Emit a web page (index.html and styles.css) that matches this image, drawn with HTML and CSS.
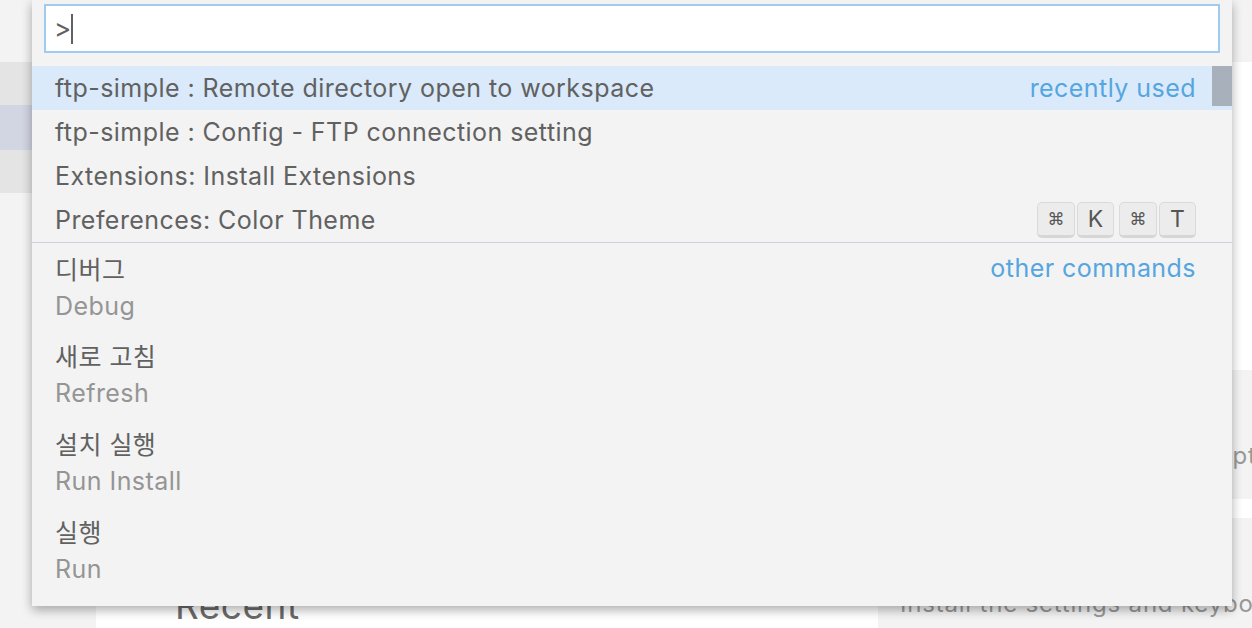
FILE: index.html
```html
<!DOCTYPE html>
<html lang="ko">
<head>
<meta charset="utf-8">
<title>Command Palette</title>
<link rel="stylesheet" href="styles.css">
</head>
<body>
<div class="workbench">
  <div class="sidebar">
    <div class="side-row"></div>
    <div class="side-row side-row-active"></div>
    <div class="side-row"></div>
  </div>
  <div class="main">
    <div class="tabbar"></div>
    <div class="editor">
      <div class="col-left">
        <h2 class="recent">Recent</h2>
      </div>
      <div class="col-right">
        <div class="panel panel-one">
          <h3 class="panel-title">Tools and languages</h3>
          <p class="panel-text">Install support for JavaScript, TypeScript, Python, PHP, Azure, Docker and more</p>
        </div>
        <div class="panel panel-two">
          <h3 class="panel-title">Settings and keybindings</h3>
          <p class="panel-text">Install the settings and keyboard shortcuts of Vim, Sublime, Atom and others</p>
        </div>
      </div>
    </div>
  </div>
</div>

<div class="quick-open">
  <div class="input-box">
    <span class="input-text">&gt;</span><span class="caret"></span>
  </div>
  <div class="list">
    <div class="row row-focused">
      <span class="label">ftp-simple : Remote directory open to workspace</span>
      <span class="group">recently used</span>
    </div>
    <div class="row">
      <span class="label">ftp-simple : Config - FTP connection setting</span>
    </div>
    <div class="row">
      <span class="label">Extensions: Install Extensions</span>
    </div>
    <div class="row">
      <span class="label">Preferences: Color Theme</span>
      <span class="keys">
        <span class="chord"><kbd class="key key-sym">⌘</kbd><kbd class="key">K</kbd></span>
        <span class="chord"><kbd class="key key-sym">⌘</kbd><kbd class="key">T</kbd></span>
      </span>
    </div>
    <div class="item item-first">
      <div class="item-line">
        <span class="label">디버그</span>
        <span class="group">other commands</span>
      </div>
      <div class="detail">Debug</div>
    </div>
    <div class="item">
      <div class="item-line"><span class="label">새로 고침</span></div>
      <div class="detail">Refresh</div>
    </div>
    <div class="item">
      <div class="item-line"><span class="label">설치 실행</span></div>
      <div class="detail">Run Install</div>
    </div>
    <div class="item">
      <div class="item-line"><span class="label">실행</span></div>
      <div class="detail">Run</div>
    </div>
  </div>
  <div class="scroll-thumb"></div>
</div>
</body>
</html>
```

FILE: styles.css
```css
* { box-sizing: border-box; }

html, body {
  margin: 0;
  padding: 0;
}

body {
  width: 1252px;
  height: 628px;
  overflow: hidden;
  position: relative;
  background: #ffffff;
  font-family: Inter, "Noto Sans CJK KR", "Noto Sans", sans-serif;
  color: #616161;
}

/* ---------- background workbench ---------- */
.workbench {
  display: flex;
  height: 628px;
}

.sidebar {
  width: 96px;
  flex: none;
  background: #f3f3f3;
  padding-top: 62px;
}

.side-row {
  height: 43px;
  background: #e4e4e4;
}

.side-row-active {
  height: 45px;
  background: #d2d5e2;
}

.main {
  flex: 1;
  display: flex;
  flex-direction: column;
  min-width: 0;
}

.tabbar {
  height: 62px;
  background: #f3f3f3;
  flex: none;
}

.editor {
  flex: 1;
  display: flex;
  background: #ffffff;
}

.col-left {
  width: 782px;
  flex: none;
  padding-left: 79px;
  padding-top: 522px;
}

.recent {
  margin: 0;
  font-size: 37px;
  font-weight: 400;
  letter-spacing: 0.5px;
  color: #6a6a6a;
  line-height: 44px;
}

.col-right {
  flex: 1;
  padding-top: 308px;
  display: flex;
  flex-direction: column;
  gap: 19px;
  min-width: 0;
}

.panel {
  background: #f3f3f3;
  padding: 22px 0 0 22px;
  white-space: nowrap;
  overflow: hidden;
}

.panel-one { height: 129px; }
.panel-two { flex: 1; }

.panel-title {
  margin: 0;
  font-size: 25px;
  font-weight: 400;
  color: #6a6a6a;
  line-height: 40px;
}

.panel-text {
  margin: 8px 0 0;
  font-size: 24px;
  line-height: 32px;
  letter-spacing: 0.8px;
  color: #999999;
}

.panel-one .panel-text {
  text-indent: 6px;
}

/* ---------- quick open widget ---------- */
.quick-open {
  position: absolute;
  left: 32px;
  top: 0;
  width: 1200px;
  background: #f3f3f3;
  padding-bottom: 12px;
  box-shadow: 0 4px 10px rgba(0, 0, 0, 0.32);
}

.input-box {
  margin: 4px 12px 0;
  height: 49px;
  background: #ffffff;
  border: 2px solid #9ecbef;
  display: flex;
  align-items: center;
  padding-left: 8px;
}

.input-text {
  font-size: 26px;
  line-height: 30px;
  color: #616161;
}

.caret {
  width: 2px;
  height: 30px;
  background: #616161;
  margin-left: 0;
}

.list {
  margin-top: 13px;
  font-size: 25px;
  letter-spacing: 0.45px;
}

.row {
  height: 44px;
  display: flex;
  align-items: center;
  justify-content: space-between;
  padding: 0 36px 0 23px;
  white-space: nowrap;
}

.row-focused {
  background: #daeafa;
}

.label {
  color: #616161;
}

.group {
  color: #55a6e0;
}

.keys {
  display: flex;
  gap: 5px;
  letter-spacing: 0;
}

.chord {
  display: flex;
  gap: 2px;
}

.key {
  font-family: Inter, "DejaVu Sans", sans-serif;
  width: 37px;
  height: 36px;
  display: flex;
  align-items: center;
  justify-content: center;
  background: #ececec;
  border: 1px solid #dadada;
  border-bottom: 3px solid #d6d6d6;
  border-radius: 5px;
  font-size: 23px;
  color: #555555;
}

.key-sym {
  font-size: 17px;
  font-family: "DejaVu Sans", sans-serif;
  width: 38px;
}

.item {
  height: 88px;
  padding: 6px 36px 6px 23px;
}

.item-first {
  border-top: 1px solid #ccd0de;
}

.item-line {
  height: 38px;
  display: flex;
  align-items: center;
  justify-content: space-between;
}

.detail {
  height: 38px;
  display: flex;
  align-items: center;
  color: #959595;
}

.scroll-thumb {
  position: absolute;
  right: 0;
  top: 66px;
  width: 20px;
  height: 40px;
  background: #a8b0bb;
}
```
